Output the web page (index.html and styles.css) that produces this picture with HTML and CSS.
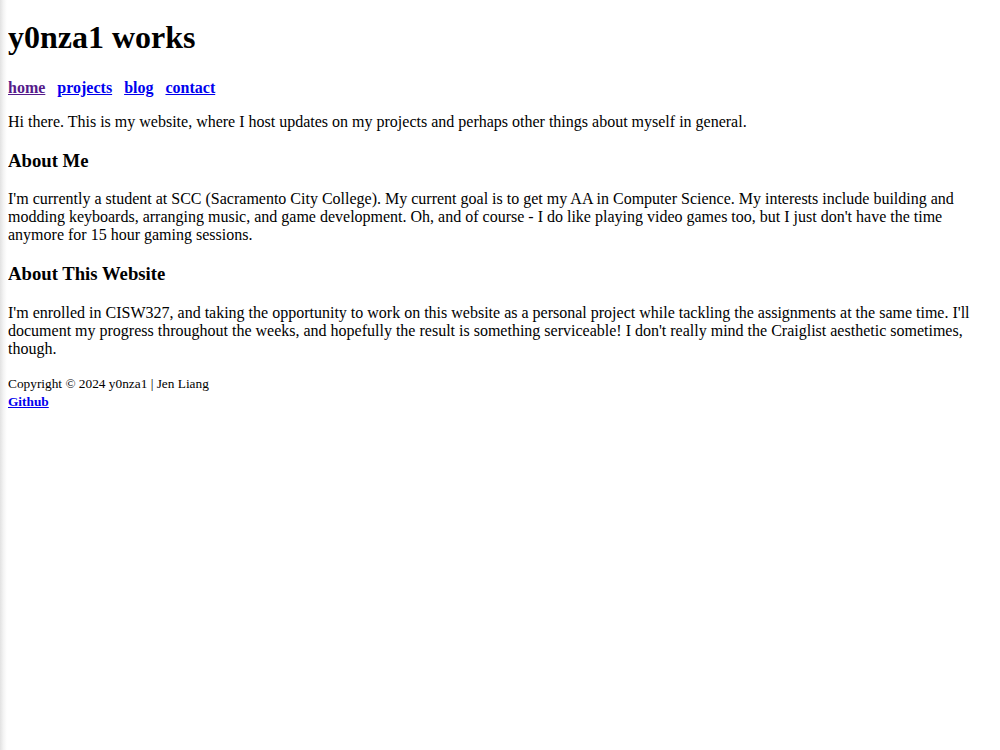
FILE: index.html
```html
<!DOCTYPE html>
<html>
<head>
<meta charset="utf-8">
<title>y0nza1 works</title>
<link rel="stylesheet" href="styles.css">
</head>
<body>
<div class="edge"></div>
<header>
<h1 class="title">y0nza1 works</h1>
<nav class="nav">
<a class="nav-link visited" href="#">home</a>
<a class="nav-link" href="#">projects</a>
<a class="nav-link" href="#">blog</a>
<a class="nav-link" href="#">contact</a>
</nav>
</header>
<main>
<p class="text">Hi there. This is my website, where I host updates on my projects and perhaps other things about myself in general.</p>
<h3 class="section-title">About Me</h3>
<p class="text">I'm currently a student at SCC (Sacramento City College). My current goal is to get my AA in Computer Science. My interests include building and modding keyboards, arranging music, and game development. Oh, and of course - I do like playing video games too, but I just don't have the time anymore for 15 hour gaming sessions.</p>
<h3 class="section-title">About This Website</h3>
<p class="text">I'm enrolled in CISW327, and taking the opportunity to work on this website as a personal project while tackling the assignments at the same time. I'll document my progress throughout the weeks, and hopefully the result is something serviceable! I don't really mind the Craiglist aesthetic sometimes, though.</p>
</main>
<footer class="footer">
<small class="copy">Copyright © 2024 y0nza1 | Jen Liang</small><br>
<small><a class="gh" href="#">Github</a></small>
</footer>
</body>
</html>
```

FILE: styles.css
```css
html {
  background: #ffffff;
}
body {
  margin: 8px;
  font-family: "Liberation Serif", "Times New Roman", serif;
  font-size: 16px;
  color: #000000;
}
.edge {
  position: fixed;
  left: 0;
  top: 0;
  bottom: 0;
  width: 7px;
  background: linear-gradient(to right, #e2e2e2, #f4f4f4 50%, #ffffff);
  pointer-events: none;
}
.title {
  font-size: 32px;
  font-weight: bold;
  margin: 11px 0 23px;
}
.nav {
  display: flex;
  gap: 12px;
  margin: 16px 0;
  font-weight: bold;
}
.nav-link {
  color: #0000ee;
  text-decoration: underline;
}
.nav-link.visited {
  color: #551a8b;
}
.text {
  margin: 16px 0;
}
.section-title {
  font-size: 18.72px;
  font-weight: bold;
  margin: 18.72px 0;
}
.footer {
  margin: 16px 0;
}
.copy {
  font-size: 13.333px;
}
.gh {
  font-size: 13.333px;
  font-weight: bold;
  color: #0000ee;
}
```
